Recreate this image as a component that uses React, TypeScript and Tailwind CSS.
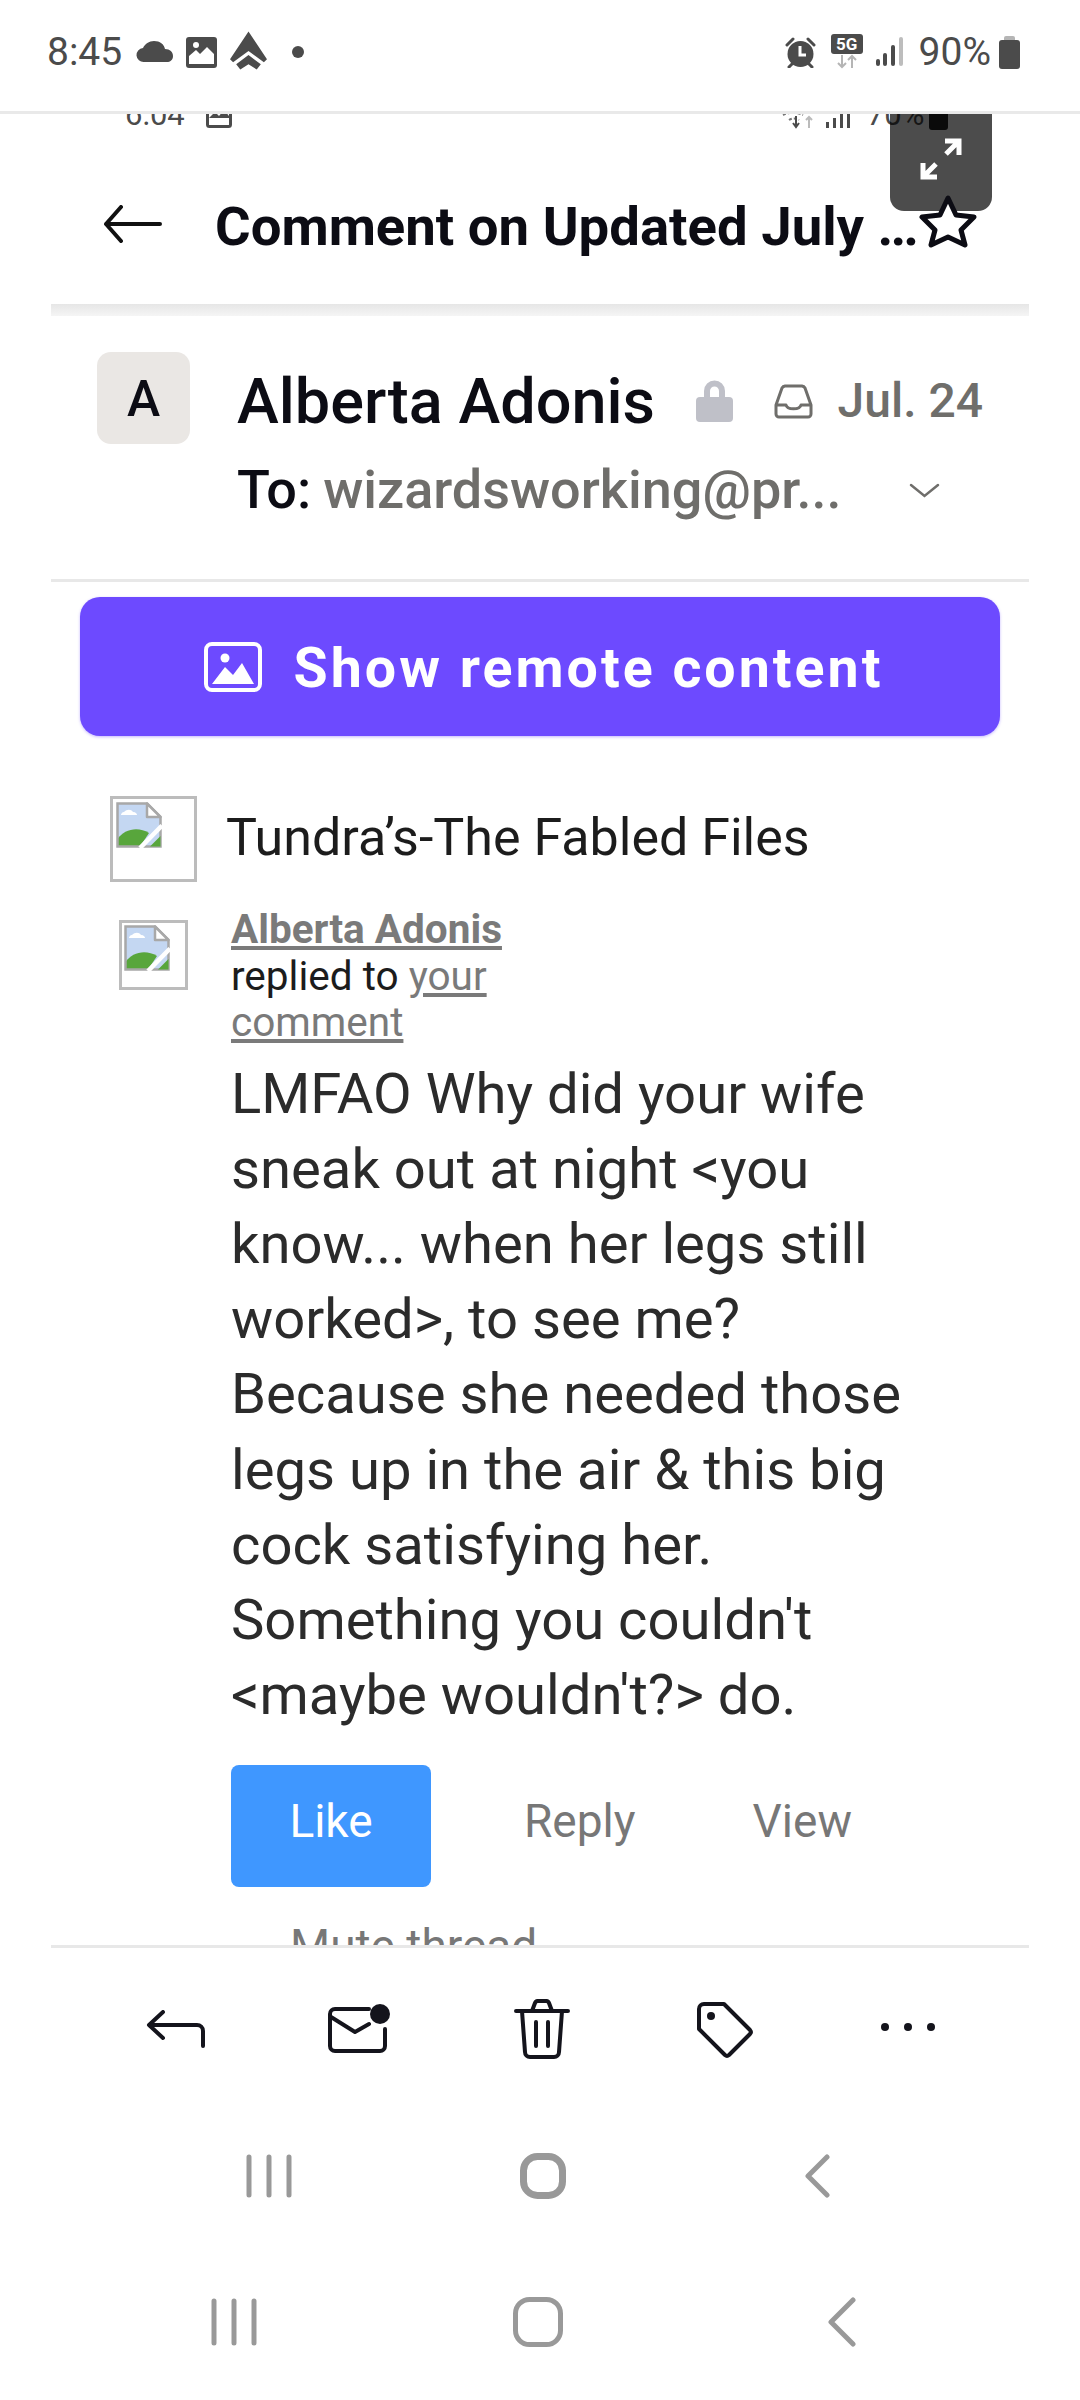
import React from 'react';

const roboto = { fontFamily: 'Roboto, sans-serif' };

const BrokenImage = ({ size }: { size: number }) => (
    <svg width={size} height={size} viewBox="0 0 46 46" fill="none">
        <path d="M1.5 1.5H31L44.5 15V44.5H1.5Z" fill="#c4d7f2" />
        <path d="M8 10c3-3 7-3 9 0 3 0 4 2 4 3H5c0-1 1-3 3-3Z" fill="#fff" />
        <path d="M1.5 44.5V37C8 27 22 24 33 31L24 44.5Z" fill="#58a63c" />
        <path d="M1.5 44.5V1.500H31L44.5 15V44.500Z" stroke="#a8a8a8" strokeWidth="2.5" />
        <path d="M31 1.5V15H44.5L31 1.5Z" fill="#fff" stroke="#a8a8a8" strokeWidth="2.5" strokeLinejoin="round" />
        <path d="M34 44.500 44.500 34V44.500Z" fill="#58a63c" />
        <path d="M24 46 46 23.500" stroke="#fff" strokeWidth="4.500" />
    </svg>
);

const StatusBar = () => (
    <div className="h-[114px] border-b-[3px] border-[#e9e9e9] flex items-center pb-[7px] text-[#4b4b4b] relative" style={roboto}>
        <span className="ml-[47px] text-[39px] leading-none">8:45</span>
        <svg className="ml-[14px]" width="38" height="22" viewBox="0 0 38 22"><path d="M8 21a7 7 0 0 1-1-14C9 3 13 0 18 0c6 0 10 3 11 8 5 0 8 3 8 7 0 4-3 6-6 6Z" fill="#4b4b4b" /></svg>
        <svg className="ml-[12px]" width="31" height="31" viewBox="0 0 31 31"><rect width="31" height="31" rx="3" fill="#4b4b4b" /><path d="M3 27V19L10 13 14 17 21 10 28 17V27Z" fill="#fff" /><circle cx="10" cy="8" r="3" fill="#fff" /></svg>
        <svg className="ml-[12px] -mt-[2px]" width="39" height="40" viewBox="0 0 38 38"><path d="M19 0 37 27 34 30 19 19 4 30 1 27Z" fill="#4b4b4b" /><path d="M19 23 31 32 27 37 19 32 11 37 7 32Z" fill="#4b4b4b" /></svg>
        <span className="ml-[24px] w-[12px] h-[12px] rounded-full bg-[#4b4b4b]"></span>
        <svg className="ml-auto" width="31" height="31" viewBox="0 0 31 31"><path d="M2 8 8 2M29 8l-6-6M7 27l-3 3M24 27l3 3" stroke="#4b4b4b" strokeWidth="3" strokeLinecap="round" /><circle cx="15.500" cy="17" r="13" fill="#4b4b4b" /><path d="M15 9v9h6" stroke="#fff" strokeWidth="3" fill="none" /></svg>
        <div className="ml-[15px] w-[32px] flex flex-col items-center mb-[1px]">
            <span className="w-[32px] h-[20px] rounded-[3px] bg-[#4b4b4b] text-white text-[17px] font-bold leading-[20px] text-center">5G</span>
            <svg width="24" height="15" viewBox="0 0 24 15"><path d="M7 1v12M3 9l4 4 4-4" stroke="#b5b5b5" strokeWidth="2" fill="none" /><path d="M17 14V2M13 6l4-4 4 4" stroke="#b5b5b5" strokeWidth="2" fill="none" /></svg>
        </div>
        <svg className="ml-[13px]" width="27" height="30" viewBox="0 0 27 30">
            <rect x="0" y="22" width="4" height="7" rx="2" fill="#4b4b4b" /><rect x="7" y="16" width="4" height="13" rx="2" fill="#4b4b4b" /><rect x="15" y="8" width="4" height="21" rx="2" fill="#4b4b4b" /><rect x="23" y="0" width="4" height="29" rx="2" fill="#bdbdbd" />
        </svg>
        <span className="ml-[16px] text-[39px] leading-none">90%</span>
        <div className="ml-[8px] mr-[60px] w-[21px] h-[33px] flex flex-col items-center">
            <span className="w-[11px] h-[4px] rounded-t-[2px] bg-[#b5b5b5]"></span>
            <span className="w-[21px] h-[29px] rounded-[3px] bg-[#4b4b4b]"></span>
        </div>
    </div>
);

const ClippedStatus = () => (
    <div className="h-[16px] overflow-hidden flex items-end text-[#4b4b4b]" style={roboto}>
        <span className="ml-[125px] text-[31px] leading-none">6:04</span>
        <svg className="ml-[21px] mb-[2px]" width="26" height="22" viewBox="0 0 26 22" fill="none"><rect x="1.500" y="-2" width="23" height="22.500" rx="2" stroke="#4b4b4b" strokeWidth="3" /><path d="M3 12 9 6l4 4 5-6 5 6v2H3Z" fill="#4b4b4b" /></svg>
        <svg className="ml-[549px] mb-[1px]" width="36" height="16" viewBox="0 0 36 16"><path d="M2 2c6-3 14-3 20 0M8 7c3-2 7-2 10 0" stroke="#777" strokeWidth="2" fill="none" strokeDasharray="3 2" /><path d="M15 3v10M12 10l3 4 3-4" stroke="#4b4b4b" strokeWidth="2" fill="none" /><path d="M28 15V4M25 7l3-3 3 3" stroke="#bbb" strokeWidth="2" fill="none" /></svg>
        <svg className="ml-[9px] mb-[2px]" width="25" height="16" viewBox="0 0 25 16"><rect x="0" y="10" width="3" height="6" fill="#4b4b4b" /><rect x="7" y="6" width="3" height="10" fill="#4b4b4b" /><rect x="14" y="2" width="3" height="14" fill="#4b4b4b" /><rect x="21" y="0" width="3" height="16" fill="#4b4b4b" /></svg>
        <span className="ml-[16px] text-[31px] leading-none">70%</span>
        <span className="ml-[5px] w-[19px] h-[26px] rounded-[3px] bg-[#222]"></span>
    </div>
);

const TitleRow = () => (
    <div className="h-[174px] pt-[14px] flex items-center pl-[103px] pr-[103px]">
        <svg className="shrink-0" width="59" height="38" viewBox="0 0 59 38" fill="none"><path d="M57 19H3M18 2 3 19l15 17" stroke="#111" strokeWidth="4" strokeLinecap="round" strokeLinejoin="round" /></svg>
        <span className="ml-[53px] mt-[5px] text-[54.500px] leading-none font-bold text-[#0c0c14] whitespace-nowrap" style={roboto}>Comment on Updated July <span className="tracking-[-3px]">...</span></span>
        <svg className="ml-auto shrink-0 relative z-10 -mt-[6px]" width="58" height="53" viewBox="0 0 58 53" fill="#fff"><path d="M29 3 37 20 55 22 42 35 46 50 29 42 12 50 16 35 3 22 21 20Z" stroke="#0c0c14" strokeWidth="5" strokeLinejoin="round" /></svg>
    </div>
);

const MessageHeader = () => (
    <div className="h-[263px] pt-[36px] flex" style={roboto}>
        <div className="ml-[46px] w-[93px] h-[92px] pt-[2px] rounded-[14px] bg-[#eae7e4] flex items-center justify-center text-[50px] font-medium text-[#0c0c14]">A</div>
        <div className="ml-[47px] flex-1">
            <div className="flex items-center h-[78px] pr-[46px] mt-[10px]">
                <span className="text-[63px] font-medium leading-none text-[#0c0c14]">Alberta Adonis</span>
                <svg className="ml-[41px]" width="37" height="42" viewBox="0 0 37 42"><path d="M8 20V11a10.500 10.500 0 0 1 21 0v9h-6v-9a4.500 4.500 0 0 0-9 0v9Z" fill="#bfc0c8" /><rect y="17" width="37" height="25" rx="4" fill="#bfc0c8" /></svg>
                <svg className="ml-[41px]" width="39" height="35" viewBox="0 0 39 35" fill="none"><path d="M2 21 8 4a4 4 0 0 1 3-2h17a4 4 0 0 1 3 2l6 17v9a3 3 0 0 1-3 3H5a3 3 0 0 1-3-3ZM2 21h10c1 5 14 5 15 0h10" stroke="#6f6e6b" strokeWidth="3" strokeLinejoin="round" /></svg>
                <span className="ml-auto text-[48px] font-medium leading-none text-[#6f6e6b]">Jul. 24</span>
            </div>
            <div className="mt-[15px] flex items-center h-[70px]">
                <span className="text-[54px] font-medium leading-none text-[#0c0c14]">To:</span>
                <span className="ml-[12px] text-[54px] font-medium leading-none text-[#6f6e6b]">wizardsworking@pr...</span>
                <svg className="ml-auto mr-[89px]" width="31" height="15" viewBox="0 0 31 15" fill="none"><path d="M2 2 15.500 13 29 2" stroke="#6f6e6b" strokeWidth="2.500" strokeLinecap="round" /></svg>
            </div>
        </div>
    </div>
);

const RemoteButton = () => (
    <div className="ml-[29px] mr-[29px] mt-[15px] h-[139px] pl-[7px] rounded-[20px] bg-[#6d4aff] flex items-center justify-center gap-[32px] text-white shadow-[0_1px_3px_rgba(109,74,255,0.4)]" style={roboto}>
        <svg width="58" height="50" viewBox="0 0 58 50" fill="none"><rect x="2" y="2" width="54" height="46" rx="6" stroke="#fff" strokeWidth="4" /><circle cx="21" cy="16" r="4.500" fill="#fff" /><path d="M8 42 21 25 29 33 38 21 50 42Z" fill="#fff" /></svg>
        <span className="mt-[4px] text-[55.500px] font-bold tracking-[3px] leading-none">Show remote content</span>
    </div>
);

const EmailBody = () => (
    <div style={roboto}>
        <div className="mt-[60px] ml-[59px] flex items-start">
            <div className="w-[87px] h-[86px] border-[3px] border-[#bcbcbc] p-[3px]"><BrokenImage size={46} /></div>
            <span className="ml-[29px] mt-[12px] text-[52px] leading-[60px] text-[#1c1c1c] whitespace-nowrap">Tundra’s-The Fabled Files</span>
        </div>
        <div className="mt-[24px] flex items-start">
            <div className="ml-[68px] mt-[14px] w-[69px] h-[70px] border-[3px] border-[#bcbcbc] p-[2px]"><BrokenImage size={46} /></div>
            <div className="ml-[43px] w-[690px]">
                <div className="w-[300px] text-[40.500px] leading-[46.500px] text-[#1c1c1c]">
                    <a className="font-bold text-[#7a7a7a] underline block whitespace-nowrap">Alberta Adonis</a>
                    replied to <a className="text-[#7a7a7a] underline">your comment</a>
                </div>
                <p className="mt-[11px] text-[56.200px] leading-[75.200px] text-[#2b2b2b]">
                    LMFAO Why did your wife sneak out at night &lt;you know... when her legs still worked&gt;, to see me? Because she needed those legs up in the air &amp; this big cock satisfying her. Something you couldn't &lt;maybe wouldn't?&gt; do.
                </p>
                <div className="mt-[32px] flex items-center text-[46px] text-[#777]">
                    <span className="w-[200px] h-[122px] pb-[10px] rounded-[8px] bg-[#3f97ff] text-white flex items-center justify-center">Like</span>
                    <span className="ml-[93px] pb-[10px]">Reply</span>
                    <span className="ml-[117px] pb-[10px]">View</span>
                </div>
                <div className="mt-[29px] ml-[59px] text-[46px] leading-[60px] text-[#777]">Mute thread</div>
            </div>
        </div>
    </div>
);

const Toolbar = () => (
    <div className="h-[162px] grid grid-cols-5 pl-[85px] pr-[81px] items-center justify-items-center">
        <svg width="60" height="38" viewBox="0 0 60 38" fill="none"><path d="M17 2 3 15l14 13M3 15h48a6 6 0 0 1 6 6v15" stroke="#14141c" strokeWidth="4" strokeLinecap="round" strokeLinejoin="round" /></svg>
        <svg width="64" height="50" viewBox="0 0 64 50" fill="none"><path d="M42 5H8a5 5 0 0 0-5 5v32a5 5 0 0 0 5 5h45a5 5 0 0 0 5-5V25" stroke="#14141c" strokeWidth="4" strokeLinecap="round" /><path d="M4 13l24 15 14-8" stroke="#14141c" strokeWidth="4" strokeLinecap="round" strokeLinejoin="round" /><circle cx="53" cy="10" r="10" fill="#14141c" /></svg>
        <svg width="56" height="60" viewBox="0 0 56 60" fill="none"><path d="M2 12h52M18 12l3-8a3 3 0 0 1 3-2h8a3 3 0 0 1 3 2l3 8M8 12l3 41a5 5 0 0 0 5 5h24a5 5 0 0 0 5-5l3-41M22 23v24M34 23v24" stroke="#14141c" strokeWidth="4" strokeLinecap="round" strokeLinejoin="round" /></svg>
        <svg width="58" height="58" viewBox="0 0 58 58" fill="none"><path d="M3 9v20l26 26a3 3 0 0 0 4 0l21-21a3 3 0 0 0 0-4L28 4H8a5 5 0 0 0-5 5Z" stroke="#14141c" strokeWidth="4" strokeLinejoin="round" /><circle cx="15" cy="16" r="4" fill="#14141c" /></svg>
        <div className="flex gap-[15px] -mt-[4px]">
            <span className="w-[8px] h-[8px] rounded-full bg-[#14141c]"></span>
            <span className="w-[8px] h-[8px] rounded-full bg-[#14141c]"></span>
            <span className="w-[8px] h-[8px] rounded-full bg-[#14141c]"></span>
        </div>
    </div>
);

const NavIcons = ({ gap, bar, stroke, homeW, homeH, backW, backH }: { gap: number; bar: number; stroke: number; homeW: number; homeH: number; backW: number; backH: number }) => (
    <>
        <svg width={gap * 2 + 6} height={bar} viewBox={`0 0 ${gap * 2 + 6} ${bar}`}>
            <path d={`M3 3V${bar - 3}M${gap + 3} 3V${bar - 3}M${gap * 2 + 3} 3V${bar - 3}`} stroke="#999" strokeWidth="5" strokeLinecap="round" />
        </svg>
        <svg width={homeW} height={homeH} viewBox={`0 0 ${homeW} ${homeH}`} fill="none">
            <rect x={stroke / 2} y={stroke / 2} width={homeW - stroke} height={homeH - stroke} rx="14" stroke="#999" strokeWidth={stroke} />
        </svg>
        <svg width={backW} height={backH} viewBox={`0 0 ${backW} ${backH}`} fill="none">
            <path d={`M${backW - 3} 3 3 ${backH / 2}l${backW - 6} ${backH / 2 - 3}`} stroke="#999" strokeWidth="5" strokeLinecap="round" strokeLinejoin="round" />
        </svg>
    </>
);

export default function App() {
    return (
        <div className="w-[1080px] h-[2400px] bg-white flex flex-col relative overflow-hidden">
            <StatusBar />
            <ClippedStatus />
            {/* expand overlay sits on top of the screenshot */}
            <div className="absolute left-[890px] top-[114px] w-[102px] h-[97px] pb-[8px] rounded-b-[14px] bg-black/70 flex items-center justify-center">
                <svg width="44" height="44" viewBox="0 0 44 44" fill="none"><path d="M26 4h14v14M40 4 27 17M18 40H4V26M4 40l13-13" stroke="#fff" strokeWidth="5" /></svg>
            </div>
            <TitleRow />
            <div className="mx-[51px] h-[12px] bg-gradient-to-b from-[#e6e6e6] to-[#f5f5f5]"></div>
            <div className="mx-[51px] h-[1629px] overflow-hidden">
                <MessageHeader />
                <div className="h-[3px] bg-[#e8e8e8]"></div>
                <RemoteButton />
                <EmailBody />
            </div>
            <div className="mx-[51px] h-[3px] bg-[#e8e8e8]"></div>
            <Toolbar />
            <div className="h-[132px] grid grid-cols-3 pl-[132px] pr-[126px] items-center justify-items-center">
                <NavIcons gap={20} bar={44} stroke={7} homeW={46} homeH={46} backW={25} backH={44} />
            </div>
            <div className="h-[157px] pt-[3px] grid grid-cols-3 pl-[82px] pr-[86px] items-center justify-items-center">
                <NavIcons gap={20} bar={48} stroke={5} homeW={50} homeH={50} backW={28} backH={50} />
            </div>
        </div>
    );
}
